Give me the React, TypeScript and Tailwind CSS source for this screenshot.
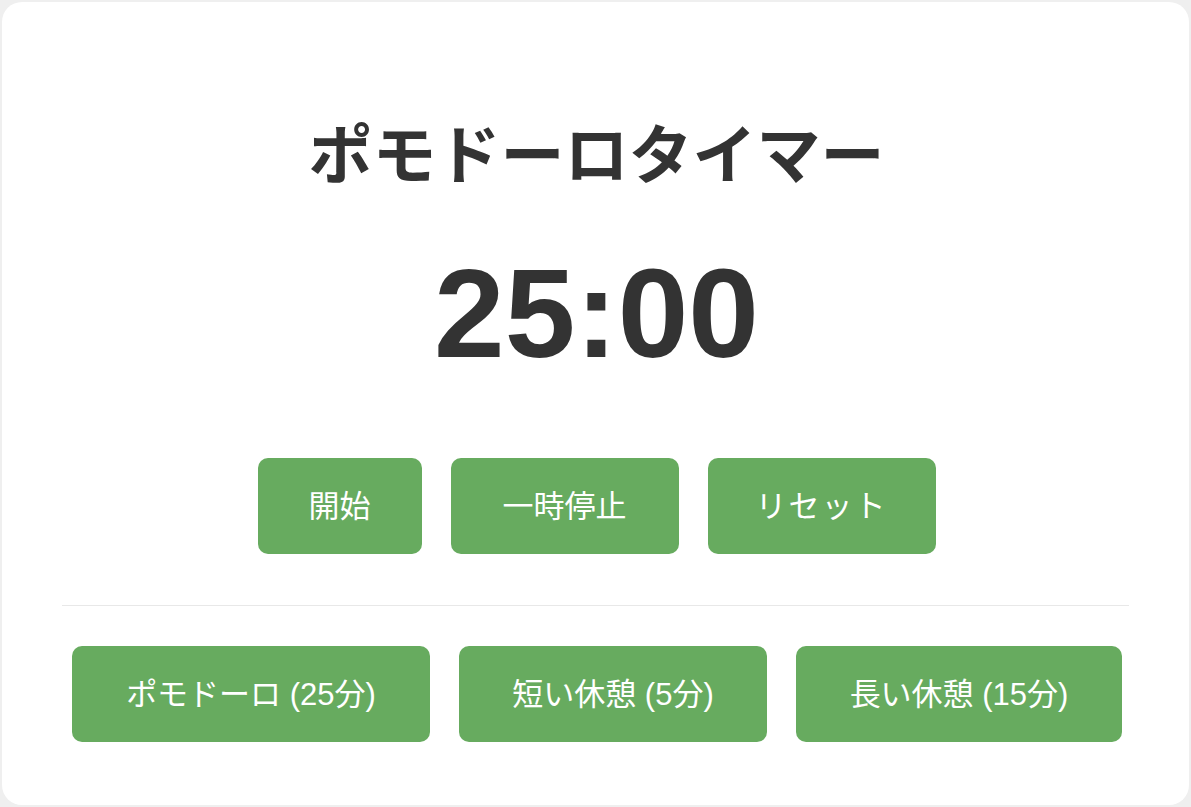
import { useState } from 'react';

type Mode = 'pomodoro' | 'short' | 'long';

const MODES: { key: Mode; label: string; minutes: number; width: string }[] = [
  { key: 'pomodoro', label: 'ポモドーロ (25分)', minutes: 25, width: 'w-[358px]' },
  { key: 'short', label: '短い休憩 (5分)', minutes: 5, width: 'w-[308px]' },
  { key: 'long', label: '長い休憩 (15分)', minutes: 15, width: 'w-[326px]' },
];

function format(sec: number) {
  const m = Math.floor(sec / 60);
  const s = sec % 60;
  return `${m.toString().padStart(2, '0')}:${s.toString().padStart(2, '0')}`;
}

export default function App() {
  const [seconds, setSeconds] = useState(25 * 60);
  const [mode, setMode] = useState<Mode>('pomodoro');

  const btn =
    'h-[96px] rounded-[10px] bg-[#67ab5f] text-white text-[31px] leading-none flex items-center justify-center hover:bg-[#5c9e54]';

  return (
    <div
      className="h-[807px] bg-[#efefef] p-[2px] text-[#333333]"
      style={{ fontFamily: '"Liberation Sans", "Noto Sans CJK JP", sans-serif' }}
    >
      <div className="h-full bg-white rounded-[20px] flex flex-col items-center">
        {/* タイトル */}
        <h1 className="mt-[122px] h-[64px] text-[64px] leading-[64px] font-bold pl-[2px]">
          ポモドーロタイマー
        </h1>

        {/* 残り時間 */}
        <div className="mt-[62px] h-[128px] text-[127px] leading-none font-bold pl-[2px]">
          {format(seconds)}
        </div>

        {/* 操作ボタン */}
        <div className="mt-[80px] flex gap-[29px] pl-[2px]">
          <button type="button" className={`${btn} w-[164px]`}>
            開始
          </button>
          <button type="button" className={`${btn} w-[228px]`}>
            一時停止
          </button>
          <button
            type="button"
            className={`${btn} w-[228px] tracking-[2px]`}
            onClick={() => setSeconds(MODES.find((m) => m.key === mode)!.minutes * 60)}
          >
            リセット
          </button>
        </div>

        <div className="mt-[51px] self-stretch mx-[60px] h-px bg-[#e8e8e8]" />

        {/* モード切替 */}
        <div className="mt-[40px] flex gap-[29px] pl-[3px]">
          {MODES.map((m) => (
            <button
              key={m.key}
              type="button"
              className={`${btn} ${m.width}`}
              onClick={() => {
                setMode(m.key);
                setSeconds(m.minutes * 60);
              }}
            >
              {m.label}
            </button>
          ))}
        </div>
      </div>
    </div>
  );
}
